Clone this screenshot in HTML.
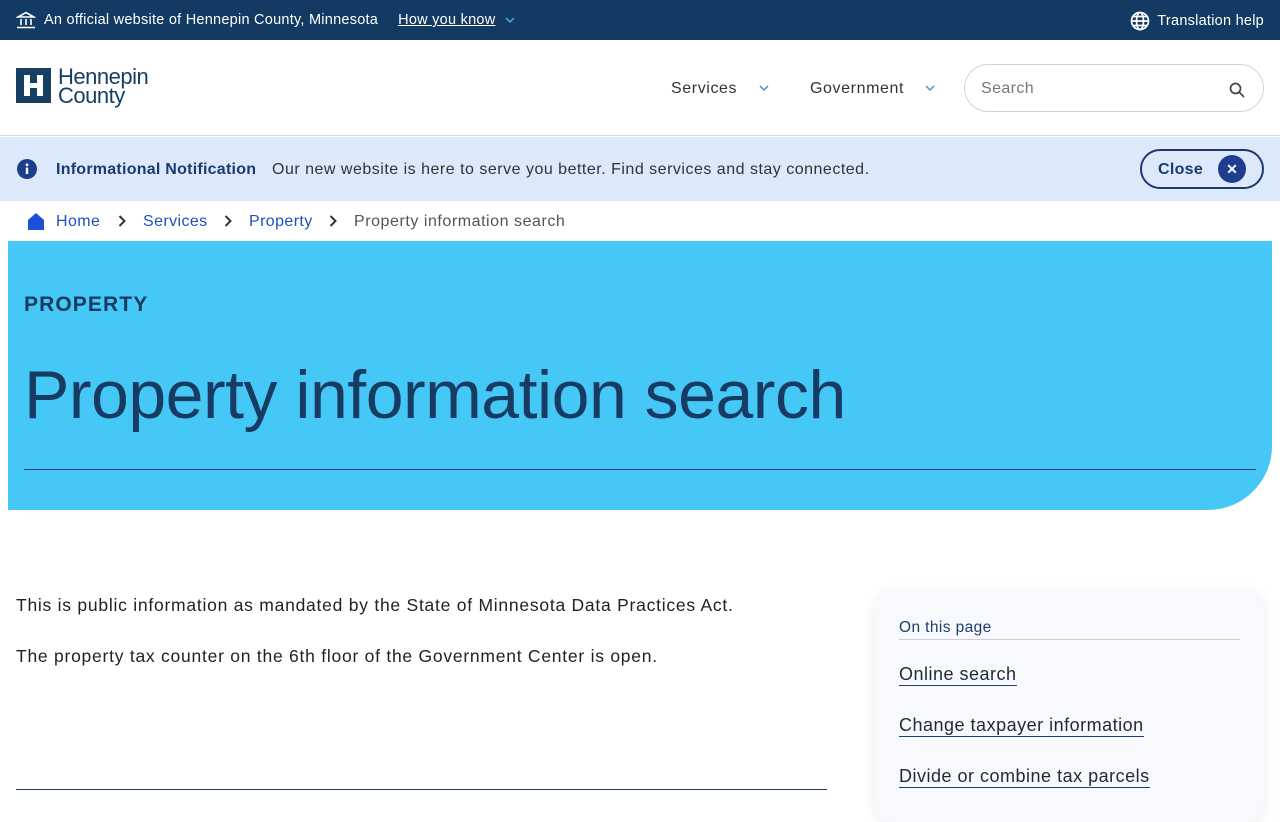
<!DOCTYPE html>
<html><head><meta charset="utf-8"><style>
*{margin:0;padding:0;box-sizing:border-box}
body{width:1280px;height:800px;overflow:hidden;font-family:"Liberation Sans",Arial,sans-serif;background:#fff;color:#1f2937;position:relative}
.top{position:absolute;left:0;top:0;width:1280px;height:40px;background:#133a63;color:#fff;font-size:14.5px;letter-spacing:.25px}
.top .l{position:absolute;left:16px;top:11px;display:flex;align-items:center}
.top .r{position:absolute;right:16px;top:11px;display:flex;align-items:center}
.hdr{position:absolute;top:40px;left:0;width:1280px;height:96px;border-bottom:1px solid #d4d8dd}
.nav{position:absolute;font-size:16px;color:#333;letter-spacing:.6px}
.search{position:absolute;left:964px;top:64px;width:300px;height:48px;border:1px solid #cfd3d8;border-radius:24px}
.notif{position:absolute;top:137px;left:0;width:1280px;height:64px;background:#dbe9fb}
.crumb{position:absolute;top:213px;left:0;font-size:16px;color:#1f4fbf;letter-spacing:.4px}
.hero{position:absolute;left:8px;top:241px;width:1264px;height:269px;background:#45c8f5;border-bottom-right-radius:64px}
a{color:inherit}
.toc{position:absolute;left:875px;top:592px;width:389px;height:230px;background:#f7f9fc;border-radius:16px;box-shadow:0 2px 14px rgba(0,0,0,.08)}
.toc a{position:absolute;left:24px;font-size:18px;color:#1f2937;text-decoration:none;border-bottom:1.5px solid #1b3f86;line-height:21px;letter-spacing:.5px}
.chev{position:absolute;top:215px}
</style></head><body>
<div class="top">
 <div class="l"><svg width="20" height="18" viewBox="0 0 20 18" fill="none" stroke="#fff" stroke-width="1.6"><path d="M2 6 10 1.5 18 6Z"/><path d="M5 8v6M10 8v6M15 8v6M1 16.5h18"/></svg><span style="margin-left:8px">An official website of Hennepin County, Minnesota</span><span style="margin-left:20px;text-decoration:underline">How you know</span><svg style="margin-left:10px" width="10" height="6" viewBox="0 0 10 6"><path d="M1 1l4 4 4-4" stroke="#4aa8e8" stroke-width="1.5" fill="none"/></svg></div>
 <div class="r"><svg width="20" height="20" viewBox="0 0 20 20" fill="none" stroke="#fff" stroke-width="1.7"><circle cx="10" cy="10" r="8.5"/><ellipse cx="10" cy="10" rx="3.5" ry="8.5"/><path d="M1.5 10h17M3 5.5h14M3 14.5h14"/></svg><span style="margin-left:7px">Translation help</span></div>
</div>
<div class="hdr">
 <svg style="position:absolute;left:16px;top:28px" width="35" height="35" viewBox="0 0 35 35"><rect width="35" height="35" fill="#173e63"/><path d="M8 7h6v8h7V7h6v21h-6v-8h-7v8H8z" fill="#fff"/></svg>
 <div style="position:absolute;left:58px;top:27px;font-size:22px;line-height:19px;color:#173e63;letter-spacing:-.5px">Hennepin<br>County</div>
 <div class="nav" style="left:671px;top:40px">Services</div>
 <svg style="position:absolute;left:759px;top:45px" width="10" height="6"><path d="M1 1l4 4 4-4" stroke="#4a90d9" stroke-width="1.5" fill="none"/></svg>
 <div class="nav" style="left:810px;top:40px">Government</div>
 <svg style="position:absolute;left:925px;top:45px" width="10" height="6"><path d="M1 1l4 4 4-4" stroke="#4a90d9" stroke-width="1.5" fill="none"/></svg>
</div>
<div class="search"><span style="position:absolute;left:16px;top:15px;font-size:16px;color:#777;letter-spacing:.4px">Search</span><svg style="position:absolute;right:18px;top:17px" width="16" height="16" viewBox="0 0 16 16" fill="none" stroke="#444" stroke-width="1.7"><circle cx="6.5" cy="6.5" r="5"/><path d="M10 10l5 5"/></svg></div>
<div class="notif">
 <svg style="position:absolute;left:17px;top:22px" width="20" height="20" viewBox="0 0 20 20"><circle cx="10" cy="10" r="10" fill="#1f3d8f"/><rect x="8.8" y="8.5" width="2.4" height="6.5" fill="#fff"/><circle cx="10" cy="5.8" r="1.4" fill="#fff"/></svg>
 <span style="position:absolute;left:56px;top:24px;font-size:16px;font-weight:bold;color:#1c3a6e;letter-spacing:.25px">Informational Notification</span>
 <span style="position:absolute;left:272px;top:24px;font-size:16px;color:#333;letter-spacing:.5px">Our new website is here to serve you better. Find services and stay connected.</span>
 <div style="position:absolute;left:1140px;top:12px;width:124px;height:40px;border:2px solid #1c3a6e;border-radius:20px"><span style="position:absolute;left:16px;top:10px;font-size:16px;font-weight:bold;color:#1c3a6e;letter-spacing:.3px">Close</span><span style="position:absolute;left:76px;top:4px;width:28px;height:28px;border-radius:50%;background:#1f3d8f;color:#fff;font-size:14px;font-weight:bold;text-align:center;line-height:28px">✕</span></div>
</div>
<svg style="position:absolute;left:27px;top:212px" width="18" height="18" viewBox="0 0 18 18"><path d="M9 1 1 8v10h16V8z" fill="#1d4fd8"/></svg>
<div class="crumb" style="left:56px">Home</div>
<svg class="chev" style="left:118px" width="8" height="12" viewBox="0 0 8 12"><path d="M1.5 1l5 5-5 5" stroke="#333" stroke-width="2" fill="none"/></svg>
<div class="crumb" style="left:143px">Services</div>
<svg class="chev" style="left:224px" width="8" height="12" viewBox="0 0 8 12"><path d="M1.5 1l5 5-5 5" stroke="#333" stroke-width="2" fill="none"/></svg>
<div class="crumb" style="left:249px">Property</div>
<svg class="chev" style="left:329px" width="8" height="12" viewBox="0 0 8 12"><path d="M1.5 1l5 5-5 5" stroke="#333" stroke-width="2" fill="none"/></svg>
<div class="crumb" style="left:354px;color:#555;letter-spacing:.55px">Property information search</div>
<div class="hero">
 <div style="position:absolute;left:16px;top:52px;font-size:21px;font-weight:bold;letter-spacing:1.1px;color:#173b63">PROPERTY</div>
 <div style="position:absolute;left:16px;top:115px;font-size:68px;color:#173b63;letter-spacing:-.5px">Property information search</div>
 <div style="position:absolute;left:16px;top:228px;width:1232px;height:1px;background:#173b63"></div>
</div>
<div style="position:absolute;left:16px;top:595px;font-size:17.5px;color:#222;letter-spacing:.75px">This is public information as mandated by the State of Minnesota Data Practices Act.</div>
<div style="position:absolute;left:16px;top:646px;font-size:17.5px;color:#222;letter-spacing:.75px">The property tax counter on the 6th floor of the Government Center is open.</div>
<div style="position:absolute;left:16px;top:789px;width:811px;height:1px;background:#173b63"></div>
<div class="toc">
 <div style="position:absolute;left:24px;top:27px;font-size:15.5px;color:#1d3f6b;letter-spacing:.4px">On this page</div>
 <div style="position:absolute;left:24px;top:47px;width:341px;height:1px;background:#ccd"></div>
 <a style="top:72px">Online search</a>
 <a style="top:123px">Change taxpayer information</a>
 <a style="top:174px">Divide or combine tax parcels</a>
</div>
</body></html>
